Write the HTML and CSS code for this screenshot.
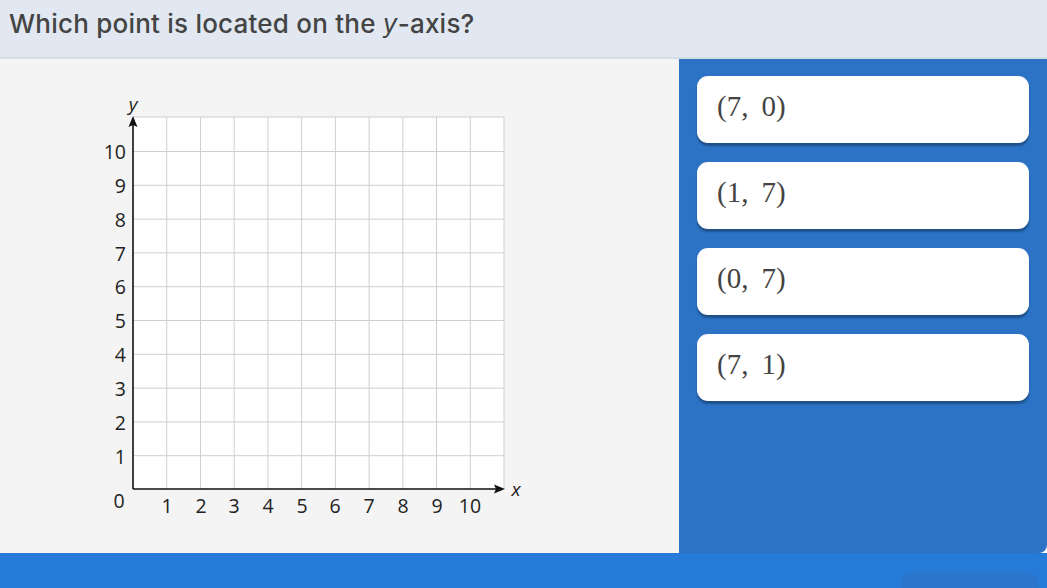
FILE: index.html
```html
<!DOCTYPE html>
<html>
<head>
<meta charset="utf-8">
<link rel="stylesheet" href="styles.css">
</head>
<body>
<div class="page">
  <header class="question">
    <h1 class="question-text">Which point is located on the <i>y</i>-axis?</h1>
  </header>
  <main class="content">
    <section class="graph-panel">
      <svg class="graph" width="679" height="494" viewBox="0 0 679 494" xmlns="http://www.w3.org/2000/svg">
        <rect x="133" y="58" width="371" height="372" fill="#ffffff"/>
        <g stroke="#cfcfcf" stroke-width="1">
          <line x1="166.7" y1="58" x2="166.7" y2="430"/>
          <line x1="200.5" y1="58" x2="200.5" y2="430"/>
          <line x1="234.2" y1="58" x2="234.2" y2="430"/>
          <line x1="267.9" y1="58" x2="267.9" y2="430"/>
          <line x1="301.6" y1="58" x2="301.6" y2="430"/>
          <line x1="335.4" y1="58" x2="335.4" y2="430"/>
          <line x1="369.1" y1="58" x2="369.1" y2="430"/>
          <line x1="402.8" y1="58" x2="402.8" y2="430"/>
          <line x1="436.5" y1="58" x2="436.5" y2="430"/>
          <line x1="470.3" y1="58" x2="470.3" y2="430"/>
          <line x1="504" y1="58" x2="504" y2="430"/>
          <line x1="133" y1="58" x2="504" y2="58"/>
          <line x1="133" y1="92.5" x2="504" y2="92.5"/>
          <line x1="133" y1="126.3" x2="504" y2="126.3"/>
          <line x1="133" y1="160.1" x2="504" y2="160.1"/>
          <line x1="133" y1="193.9" x2="504" y2="193.9"/>
          <line x1="133" y1="227.7" x2="504" y2="227.7"/>
          <line x1="133" y1="261.5" x2="504" y2="261.5"/>
          <line x1="133" y1="295.3" x2="504" y2="295.3"/>
          <line x1="133" y1="329.1" x2="504" y2="329.1"/>
          <line x1="133" y1="362.9" x2="504" y2="362.9"/>
          <line x1="133" y1="396.7" x2="504" y2="396.7"/>
        </g>
        <g stroke="#111" stroke-width="1.6">
          <line x1="133" y1="430" x2="133" y2="66"/>
          <line x1="133" y1="430" x2="496" y2="430"/>
        </g>
        <polygon points="133,57 128.5,68 133,66 137.5,68" fill="#111"/>
        <polygon points="505,430 494,425.5 496,430 494,434.5" fill="#111"/>
        <g class="axis-name">
          <text x="133" y="52" text-anchor="middle">y</text>
          <text x="516" y="437" text-anchor="middle">x</text>
        </g>
        <g class="tick" text-anchor="end">
          <text x="126" y="100">10</text>
          <text x="126" y="134">9</text>
          <text x="126" y="168">8</text>
          <text x="126" y="202">7</text>
          <text x="126" y="235">6</text>
          <text x="126" y="269">5</text>
          <text x="126" y="303">4</text>
          <text x="126" y="337">3</text>
          <text x="126" y="371">2</text>
          <text x="126" y="405">1</text>
        </g>
        <g class="tick" text-anchor="middle">
          <text x="119" y="449">0</text>
          <text x="167" y="454">1</text>
          <text x="201" y="454">2</text>
          <text x="234" y="454">3</text>
          <text x="268" y="454">4</text>
          <text x="302" y="454">5</text>
          <text x="335" y="454">6</text>
          <text x="369" y="454">7</text>
          <text x="403" y="454">8</text>
          <text x="437" y="454">9</text>
          <text x="470" y="454">10</text>
        </g>
      </svg>
    </section>
    <section class="answers">
      <button class="answer">(7,&#8201; 0)</button>
      <button class="answer">(1,&#8201; 7)</button>
      <button class="answer">(0,&#8201; 7)</button>
      <button class="answer">(7,&#8201; 1)</button>
    </section>
  </main>
  <footer class="footer">
    <div class="footer-tab"></div>
  </footer>
</div>
</body>
</html>
```

FILE: styles.css
```css
* { box-sizing: border-box; }
html, body {
  margin: 0;
  padding: 0;
  width: 1047px;
  height: 588px;
  overflow: hidden;
}
.page {
  display: flex;
  flex-direction: column;
  width: 1047px;
  height: 588px;
  font-family: "Inter", "Open Sans", sans-serif;
}
.question {
  height: 59px;
  background: #e1e8f1;
  border-bottom: 2px solid #d6dce3;
  padding: 8px 0 0 9px;
}
.question-text {
  margin: 0;
  font-size: 26px;
  font-weight: 500;
  color: #444;
  letter-spacing: 0.22px;
  line-height: 32px;
}
.question-text i {
  font-style: italic;
  font-weight: 400;
}
.content {
  display: flex;
  height: 494px;
}
.graph-panel {
  width: 679px;
  background: #f4f4f4;
}
.graph {
  display: block;
}
.graph .tick text {
  font-family: "Open Sans", sans-serif;
  font-size: 19.5px;
  fill: #222;
}
.graph .axis-name text {
  font-family: "Open Sans", sans-serif;
  font-style: italic;
  font-size: 19px;
  fill: #222;
}
.answers {
  flex: 1;
  background: #2c73c5;
  padding: 17px 18px 0 18px;
  display: flex;
  flex-direction: column;
  gap: 19px;
  border-bottom-right-radius: 8px;
}
.answer {
  height: 67px;
  background: #fff;
  border: none;
  border-radius: 11px;
  box-shadow: 0 3px 2px rgba(0, 0, 0, 0.3);
  text-align: left;
  padding: 0 0 6px 20px;
  font-family: "Liberation Serif", "DejaVu Serif", serif;
  font-size: 29px;
  color: #444;
}
.footer {
  flex: 1;
  background: #277bd8;
  display: flex;
  justify-content: flex-end;
  align-items: flex-end;
  padding-right: 8px;
}
.footer-tab {
  width: 138px;
  height: 16px;
  background: #2b75cc;
  border-radius: 12px 12px 0 0;
}
```
